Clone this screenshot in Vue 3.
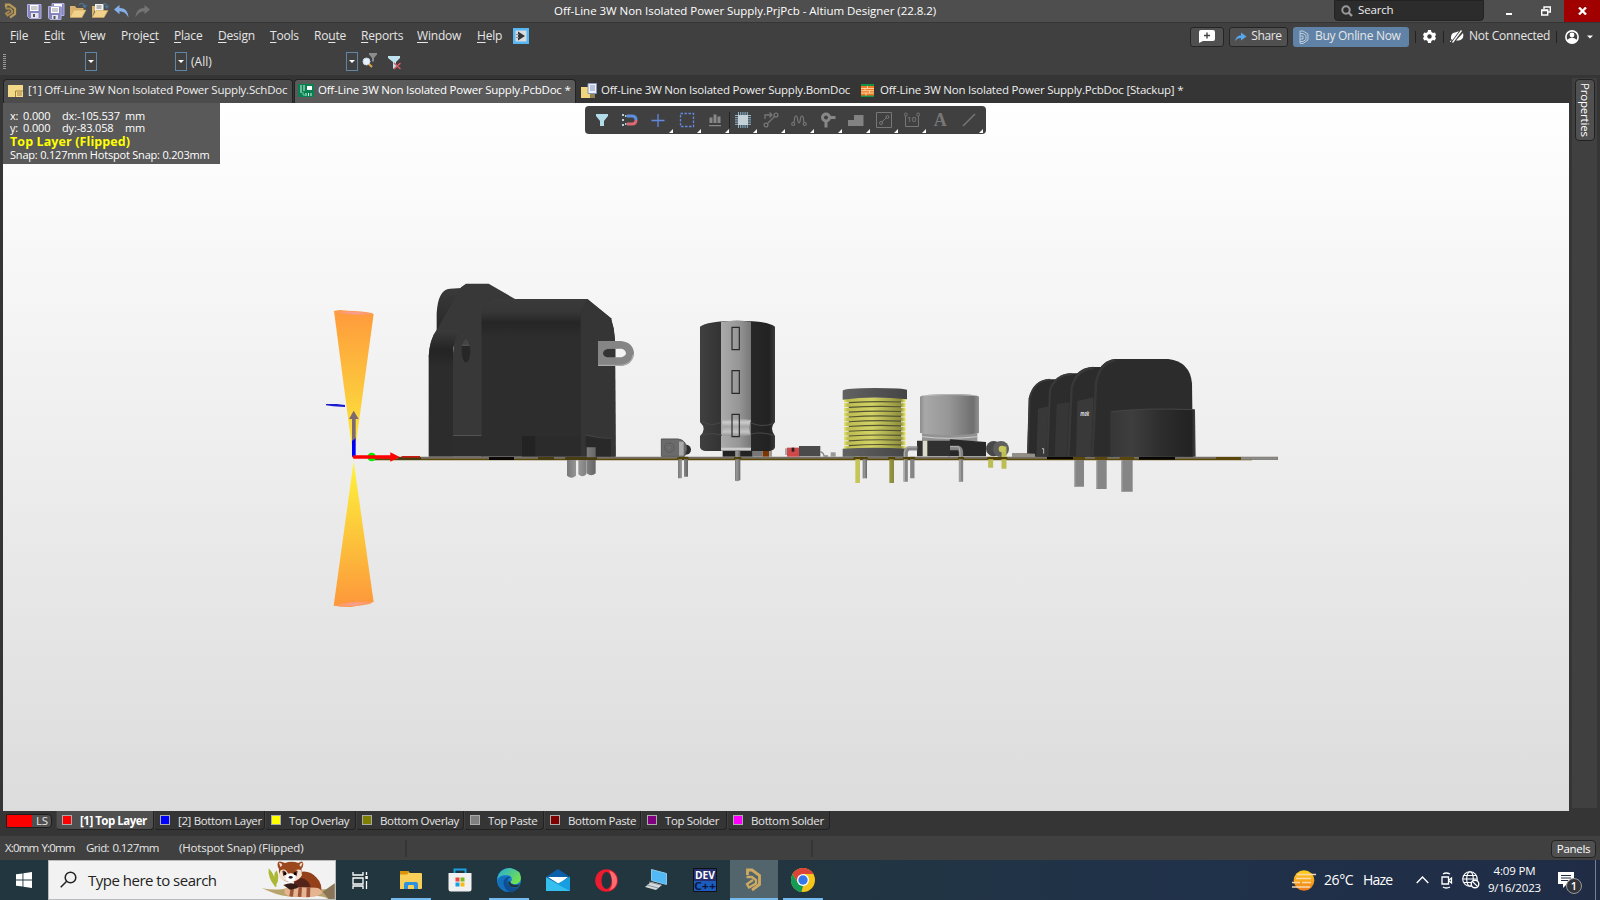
<script setup>
const menus = [
  { a: '', k: 'F', b: 'ile', w: 34 },
  { a: '', k: 'E', b: 'dit', w: 36 },
  { a: '', k: 'V', b: 'iew', w: 41 },
  { a: 'Proje', k: 'c', b: 't', w: 53 },
  { a: '', k: 'P', b: 'lace', w: 44 },
  { a: '', k: 'D', b: 'esign', w: 52 },
  { a: '', k: 'T', b: 'ools', w: 44 },
  { a: 'Ro', k: 'u', b: 'te', w: 47 },
  { a: '', k: 'R', b: 'eports', w: 56 },
  { a: '', k: 'W', b: 'indow', w: 60 },
  { a: '', k: 'H', b: 'elp', w: 36 },
]
const layers = [
  { name: '[1] Top Layer', color: '#ff0000', w: 98, active: true },
  { name: '[2] Bottom Layer', color: '#0000ff', w: 111 },
  { name: 'Top Overlay', color: '#ffff00', w: 91 },
  { name: 'Bottom Overlay', color: '#808000', w: 108 },
  { name: 'Top Paste', color: '#808080', w: 80 },
  { name: 'Bottom Paste', color: '#800000', w: 97 },
  { name: 'Top Solder', color: '#800080', w: 86 },
  { name: 'Bottom Solder', color: '#ff00ff', w: 103 },
]
const coils = Array.from({ length: 10 }, (_, i) => 305 + i * 14.3)
const chipPins = [0, 1, 2, 3, 4].map((i) => 3.5 + i * 2.2)
</script>

<template>
  <div class="screen">
    <header class="titlebar">
      <div class="quick">
        <svg class="logo" width="13" height="16" viewBox="0 0 26 32"><path d="M4 9V3h7l11 8v11l-10 7" fill="none" stroke="#b8995a" stroke-width="4.500" /><path d="M3 11h9l4 4v4L7 25l-3-4 7-5" fill="none" stroke="#a88a4e" stroke-width="4" /></svg>
        <svg class="q-save" width="15" height="16" viewBox="0 0 15 16"><path d="M.5 1.500h13.500v14h-11.500l-2-2z" fill="#8584bd" stroke="#b1b0de" /><path d="M3 2h8.500v6H3z" fill="#fff" /><path d="M4 4h6.500M4 6h6.500" stroke="#999" /><path d="M4 10h7.500v5H4z" fill="#e4e4f0" /><path d="M6 11h2v3H6z" fill="#555" /></svg>
        <svg class="q-all" width="17" height="17" viewBox="0 0 17 17"><path d="M4 .5h12v12H4z" fill="#8584bd" stroke="#b1b0de" /><path d="M6 1h8v3H6z" fill="#fff" /><path d="M.5 3.500h12.500v13h-11l-1.500-1.500z" fill="#8584bd" stroke="#b1b0de" /><path d="M3 4h8v6H3z" fill="#fff" /><path d="M4 6h6M4 8h6" stroke="#999" /><path d="M4 12h6v4H4z" fill="#e4e4f0" /><path d="M5.500 13h2v3h-2z" fill="#555" /></svg>
        <svg class="q-open" width="17" height="16" viewBox="0 0 17 16"><path d="M0 14V3h5l1.500 2h7v3" fill="#d9b36d" /><path d="M0 14.500 4 7h12l-4 7.500z" fill="#f1d28c" stroke="#d0a55b" stroke-width=".6" /><path d="M9 1.500c3-2 5-1 6 2m-2-1 2 2 1.500-2.500" fill="none" stroke="#4f7596" stroke-width="1.200" /></svg>
        <svg class="q-open" width="17" height="16" viewBox="0 0 17 16"><path d="M0 14V3h3v4" fill="#d9b36d" /><path d="M3 1h8.500v9H3z" fill="#f4f4f4" /><path d="M4.500 3h5M4.500 5h5" stroke="#777" /><path d="M0 14.500 4 7.500h12l-4 7z" fill="#f1d28c" stroke="#d0a55b" stroke-width=".6" /><path d="M11 1c2-1 4 0 4 3m-2-1 2 2 1.500-2.500" fill="none" stroke="#4f7596" stroke-width="1.200" /></svg>
        <svg class="q-undo" width="16" height="14" viewBox="0 0 16 14"><path d="M0 4.500 5.500 0v3C11 3 14 6 14.500 12.500 12 8 10 6.500 5.500 6.200v3z" fill="#86b0ea" /></svg>
        <svg width="16" height="14" viewBox="0 0 16 14"><path d="M15 4.500 9.500 0v3C4 3 1 6 .5 12.500 3 8 5 6.500 9.500 6.200v3z" fill="#747474" /></svg>
      </div>
      <div class="title">Off-Line 3W Non Isolated Power Supply.PrjPcb - Altium Designer (22.8.2)</div>
      <div class="winctl">
        <div class="search"><svg width="12" height="12" viewBox="0 0 12 12"><circle cx="5" cy="5" r="3.700" fill="none" stroke="#999" stroke-width="2" /><path d="m7.500 7.500 3.500 3.500" stroke="#999" stroke-width="2.400" /></svg><span>Search</span></div>
        <div class="min"></div>
        <svg class="restore" width="10" height="10" viewBox="0 0 10 10"><path d="M3 3V1h6.300v5H7M.7 4h6v5h-6z" fill="none" stroke="#fff" stroke-width="1.400" /><path d="M.5 4.500h6.500" stroke="#fff" stroke-width="1.500" /></svg>
        <div class="close"><svg width="9" height="8" viewBox="0 0 9 8"><path d="m1 .5 7 7m0-7-7 7" stroke="#fff" stroke-width="2.300" /></svg></div>
      </div>
    </header>

    <section class="menuarea">
      <div class="menurow">
        <nav class="menus">
          <span v-for="m in menus" :key="m.k + m.b" :style="{ width: m.w + 'px' }">{{ m.a }}<u>{{ m.k }}</u>{{ m.b }}</span>
          <svg width="16" height="16" viewBox="0 0 16 16"><path d="M0 0h16v16H0z" fill="#57b6f4" /><path d="M2.500 2.500h11v11h-11z" fill="#d7dce0" /><path d="M5 3.500 12 8l-7 4.500z" fill="#333" /><path d="M3 6h3v1H3zM3 9h3v1H3z" fill="#888" /></svg>
        </nav>
        <div class="account">
          <div class="btn note"><svg width="16" height="13" viewBox="0 0 16 13"><path d="M2 0h12q2 0 2 2v7q0 2-2 2H4l-4 2V2q0-2 2-2z" fill="#fff" /><path d="M8 2.500v6M5 5.500h6" stroke="#444" stroke-width="1.400" /></svg></div>
          <div class="btn share"><svg width="12" height="10" viewBox="0 0 12 10"><path d="M0 9C1 5 3 3.500 6 3.500V.5l5.500 4-5.500 4V6C3 6 2 7 0 9z" fill="#57a6ee" /></svg><span>Share</span></div>
          <div class="buy"><svg width="10" height="14" viewBox="0 0 10 14" fill="none" stroke="#d5dde5" stroke-width=".8"><path d="M1 1h3l5 3v6l-5 3.500H1M1 3.500h3l3 2v4l-3 2H1M1 6h3v3H1zM1 1v5M1 9v4" /></svg><span>Buy Online Now</span></div>
          <i></i>
          <svg class="gear" width="13" height="13" viewBox="0 0 13 13"><path d="M5 0h3l.4 2 1.800 1 1.800-.6L13 5l-1.200 1.500L13 8l-1.200 2.600-1.800-.6-1.600 1L8 13H5l-.4-2L3 10l-1.800.6L0 8l1.200-1.500L0 5l1.200-2.600L3 3l1.600-1z" fill="#fff" /><circle cx="6.500" cy="6.500" r="2.200" fill="#404040" /></svg>
          <i></i>
          <svg class="plug" width="14" height="13" viewBox="0 0 14 13"><path d="M1 9Q.5 3 5 2.500l4-1.200L2.500 10zM13 3Q14.500 9.500 9 10.500H6z" fill="#fff" /><path d="M11.500.5 2.500 12.500" stroke="#fff" stroke-width="1.300" /><path d="m1 10.500-1 1.500" stroke="#fff" /></svg>
          <span class="nc">Not Connected</span>
          <i></i>
          <svg class="user" width="14" height="14" viewBox="0 0 14 14"><circle cx="7" cy="7" r="6.100" fill="none" stroke="#fff" stroke-width="1.600" /><circle cx="7" cy="5" r="2.400" fill="#fff" /><path d="M2 10q5-4.500 10 0-2 3.500-5 3.500T2 10z" fill="#fff" /></svg>
          <svg width="6" height="4" viewBox="0 0 6 4"><path d="M0 .5h6L3 3.500z" fill="#fff" /></svg>
        </div>
      </div>
      <div class="filterrow">
        <b class="grip"></b>
        <div class="combo c1"><em></em></div>
        <div class="combo c2"><em></em></div>
        <div class="combo c3"><span>(All)</span><em></em></div>
        <svg class="find" width="17" height="16" viewBox="0 0 17 16"><path d="M7 0h8v1.500L12 5v3.500h-2V5L7 1.500z" fill="#8c8c8c" /><circle cx="4.500" cy="8.500" r="3.500" fill="#e6f2ff" stroke="#cbd6e2" /><path d="m7 11 3 3" stroke="#d8a54b" stroke-width="2.200" /></svg>
        <svg width="14" height="15" viewBox="0 0 14 15"><path d="M0 1h12v2L8 7v5l-3 2V7L0 3z" fill="#bfe3ee" /><path d="m6 8 6.500 6M12.500 8 6 14" stroke="#d46065" stroke-width="1.500" /></svg>
      </div>
    </section>

    <div class="tabs">
      <div class="tab t1"><svg width="15" height="12" viewBox="0 0 15 12"><path d="M0 0h15v12H0z" fill="#f2d987" /><path d="M7 5.500h8v6.500H7z" fill="#f7dd92" /><path d="M15 6H7.500v6M9 8h5M9 10h5" fill="none" stroke="#94762f" stroke-width=".9" /></svg><span>[1] Off-Line 3W Non Isolated Power Supply.SchDoc</span></div>
      <div class="tab t2"><svg width="16" height="13" viewBox="0 0 16 13"><path d="M0 0h16v13H0z" fill="#078150" /><path d="M9 2h5v4H9z" fill="#fff" /><path d="M2 2h2M2 4h2M2 6h2M2 8h2M5 2h2M5 4h2M5 6h2M8 9v3M10.500 9v3M13 9v3" stroke="#d7f2e4" /><path d="M5 8v3h2" stroke="#79ccaa" fill="none" /></svg><span>Off-Line 3W Non Isolated Power Supply.PcbDoc *</span></div>
      <div class="tab t3"><svg width="16" height="15" viewBox="0 0 16 15"><path d="M0 4h9v11H0z" fill="#f2d67d" /><path d="M7 .5h8.500v10H7z" fill="#eef3fb" stroke="#8395bd" /><path d="M9 3h5M9 5h5M9 7h5" stroke="#8395bd" /><path d="M8 12h6M8 14h6" stroke="#ead07a" stroke-width="1.200" /></svg><span>Off-Line 3W Non Isolated Power Supply.BomDoc</span></div>
      <div class="tab t4"><svg width="13" height="13" viewBox="0 0 13 13"><path d="M0 0h13v13H0z" fill="#149047" /><path d="M0 2h13v9.500H0z" fill="#f07a28" /><path d="M0 4.500h13M0 6.700h13M0 9h13M6.500 2v2.500M4 4.500v2M8.500 6.500V9M5 9v2.500" stroke="#ffdca6" stroke-width=".9" /></svg><span>Off-Line 3W Non Isolated Power Supply.PcbDoc [Stackup] *</span></div>
    </div>

    <main class="work">
      <div class="canvas">
        <svg class="scene" width="1566" height="708" viewBox="3 103 1566 708">
          <defs>
            <linearGradient id="bg" x2="0" y2="1"><stop stop-color="#fff" /><stop offset="1" stop-color="#dcdcdc" /></linearGradient>
            <linearGradient id="up" x2="0" y2="1"><stop stop-color="#ff9a3c" /><stop offset=".55" stop-color="#fcc83c" /><stop offset="1" stop-color="#fff43a" /></linearGradient>
            <linearGradient id="dn" x2="0" y2="1"><stop stop-color="#fff43a" /><stop offset=".45" stop-color="#fccb3b" /><stop offset="1" stop-color="#fd963b" /></linearGradient>
            <radialGradient id="pk"><stop stop-color="#f7a0a0" /><stop offset="1" stop-color="#fd9a50" /></radialGradient>
            <linearGradient id="side" x2="0" y2="1"><stop stop-color="#3b3b3b" /><stop offset=".16" stop-color="#242424" /><stop offset=".3" stop-color="#2c2c2c" /></linearGradient>
            <linearGradient id="edge" x2="0" y2="1"><stop stop-color="#3a3a3a" /><stop offset="1" stop-color="#272727" /></linearGradient>
            <linearGradient id="roof" x2="0" y2="1"><stop stop-color="#3a3a3a" /><stop offset=".35" stop-color="#363636" /><stop offset=".62" stop-color="#262626" /><stop offset="1" stop-color="#2d2d2d" /></linearGradient>
            <linearGradient id="cyl"><stop stop-color="#404040" /><stop offset=".28" stop-color="#333" /><stop offset=".6" stop-color="#292929" /><stop offset=".92" stop-color="#222" /><stop offset="1" stop-color="#3a3a3a" /></linearGradient>
            <linearGradient id="sil"><stop stop-color="#8c8c8c" /><stop offset=".08" stop-color="#a8a8a8" /><stop offset=".5" stop-color="#969696" /><stop offset=".9" stop-color="#6f6f6f" /><stop offset="1" stop-color="#929292" /></linearGradient>
            <linearGradient id="band"><stop stop-color="#aaa" /><stop offset=".6" stop-color="#969696" /><stop offset="1" stop-color="#787878" /></linearGradient>
            <linearGradient id="neck" x2="0" y2="1"><stop stop-color="#999" /><stop offset=".2" stop-color="#ccc" /><stop offset=".45" stop-color="#a5a5a5" /><stop offset=".75" stop-color="#c4c4c4" /><stop offset="1" stop-color="#8f8f8f" /></linearGradient>
            <linearGradient id="yel"><stop stop-color="#e6e66a" /><stop offset=".06" stop-color="#bcbc52" /><stop offset=".45" stop-color="#d2d265" /><stop offset=".92" stop-color="#90903f" /><stop offset="1" stop-color="#eded70" /></linearGradient>
            <linearGradient id="cap"><stop stop-color="#626262" /><stop offset="1" stop-color="#454545" /></linearGradient>
            <linearGradient id="pin"><stop stop-color="#777" /><stop offset=".35" stop-color="#999" /><stop offset="1" stop-color="#666" /></linearGradient>
            <linearGradient id="ypin"><stop stop-color="#c6c65a" /><stop offset=".5" stop-color="#bbbb52" /><stop offset="1" stop-color="#8a8a3e" /></linearGradient>
            <linearGradient id="term"><stop stop-color="#363636" /><stop offset=".25" stop-color="#3e3e3e" /><stop offset=".6" stop-color="#2d2d2d" /><stop offset=".95" stop-color="#222" /><stop offset="1" stop-color="#444" /></linearGradient>
          </defs>
          <path d="M3 103h1566v708H3z" fill="url(#bg)" />

          <g transform="translate(320 270) scale(.33333)">
            <path d="M42 123 60 120 161 132 101 572z" fill="url(#up)" />
            <ellipse cx="103" cy="129" rx="56" ry="6" transform="rotate(3 103 129)" fill="url(#pk)" />
            <path d="M101 575 41 1007 92 1011 161 996z" fill="url(#dn)" />
            <ellipse cx="102" cy="1002" rx="54" ry="7" transform="rotate(-5 102 1002)" fill="url(#pk)" />
            <path d="M18 402 50 402 75 405 75 411 40 409 18 406z" fill="#1a1ad2" />

            <path d="M350 180V130Q354 58 390 56L425 54 450 90 400 190z" fill="url(#edge)" />
            <path d="M350 180 423 52 438 41h68L585 87 500 130 399 230 326 260Q328 210 350 180z" fill="#383838" />
            <path d="M326 560V260Q330 205 350 180L420 180Q399 205 399 260V560z" fill="url(#side)" />
            <path d="M399 497V250Q402 200 430 170L500 95 525 87 502 497z" fill="#383838" />
            <path d="M399 497h90v63h-90z" fill="#2d2d2d" />
            <path d="M485 560V140Q488 95 520 87H802L873 145Q883 175 885 210L887 560z" fill="#2d2d2d" />
            <path d="M485 200V140Q488 95 520 87H802L782 130V200z" fill="url(#roof)" />
            <path d="M782 560V130L802 87 873 145Q883 175 885 210L887 560z" fill="#353535" />
            <path d="M606 498h40v62h-40z" fill="#232323" /><path d="M646 498h136v62H646z" fill="#2b2b2b" />
            <path d="M797 498 873 504V560H797z" fill="#292929" /><path d="M797 495 838 503 873 505" stroke="#444" stroke-width="3" fill="none" />
            <ellipse cx="438" cy="242" rx="13" ry="35" fill="#272727" /><path d="M426 226Q430 208 438 207 446 208 449 226z" fill="#444" /><path d="M426 226h23" stroke="#6a6a6a" stroke-width="2" />
            <path d="M862 236H887V262H862Q848 250 862 236z" fill="#333" />
            <path d="M887 236H904Q917 239 918 249 916 259 904 262H887z" fill="#f3f3f3" />
            <path d="M834 213H902Q940 217 942 250 938 285 902 288H834zM862 237Q850 240 849 250 850 260 862 262H904Q918 258 918 249 916 238 904 236z" fill="#858585" fill-rule="evenodd" />
            <path d="M834 286H902Q936 283 940 254" fill="none" stroke="#aaa" stroke-width="4" />
          </g>

          <path d="M372 456.700H1278v3.300H372z" fill="#747067" /><path d="M372 458.700H1252v1.500H372z" fill="#5c4908" />
          <path d="M398 457h23v3h-23zM538 457h16v3h-16zM567 457h30v3h-30z" fill="#493d12" />
          <path d="M489 457h25v3h-25z" fill="#090806" />

          <g transform="translate(320 270) scale(.33333)">
            <path d="M741 567h27v50q-13 12-27 0zM775 565h24v48q-12 12-24 0zM800 532h27v78q-13 12-27 0z" fill="url(#pin)" />
            <path d="M735 562h95v8h-95z" fill="#493d12" />
            <path d="M96 560V508L107 503V560z" fill="#00f" /><path d="M96 513V447H87L101 422 116 447H107V505z" fill="#7d6a70" />
            <circle cx="155" cy="561" r="13" fill="#00f000" />
            <path d="M101 556H211V547L239 561 211 575V566H101Q95 561 101 556z" fill="#f00" /><path d="M245 558h55v5h-55z" fill="#c91a10" />
          </g>

          <g transform="translate(640 300) scale(.33333)">
            <circle cx="138" cy="449" r="15" fill="#2c2c2c" />
            <path d="M64 417h50q25 3 26 30l-6 22H64z" fill="#6b6b6b" stroke="#565656" stroke-width="3" /><path d="M117 425h14v42h-14z" fill="#aaa" />
            <circle cx="88" cy="443" r="14" fill="#707070" stroke="#565656" stroke-width="3" /><circle cx="88" cy="443" r="8" fill="none" stroke="#5c5c5c" stroke-width="2" />
            <path d="M114 470h12v65h-12zM132 470h12v60h-12z" fill="url(#pin)" />
            <path d="M248 445h90v25h-90z" fill="#222" /><path d="M338 452h30v18h-30z" fill="#777" /><path d="M368 452h20v18h-20z" fill="#7c3604" /><path d="M388 452h8v18h-8z" fill="#999" />
            <path d="M180 80Q200 63 292 62 385 62 405 80V366Q387 384 405 408V442Q402 452 390 453H195Q182 451 180 442V408Q202 387 180 366z" fill="url(#cyl)" />
            <path d="M243 65Q290 60 333 65V447H243z" fill="url(#band)" /><path d="M243 360q50-8 90 0-10 25 0 45-45 8-90 0 12-25 0-45z" fill="url(#neck)" /><path d="M243 443h90v9h-90z" fill="#ccc" />
            <path d="M186 364q30 18 58 2M184 406q30-10 62 0M331 368q35 16 70 2M331 402q35-8 69 4" fill="none" stroke="#484848" stroke-width="3" />
            <path d="M276 82h22v67h-22zM276 212h22v68h-22zM276 343h22v67h-22z" fill="none" stroke="#292929" stroke-width="3.500" />
            <path d="M285 452h16v88l-8 4-8-2z" fill="url(#pin)" />
            <path d="M435 445h10v20h-10z" fill="#aaa" /><path d="M441 443h37v27h-37z" fill="#d0484a" /><path d="M455 443h8v12h-8z" fill="#222" /><path d="M477 438h64v31h-64z" fill="#4a4a4a" /><path d="M541 456q9 0 11 12h12" fill="none" stroke="#888" stroke-width="4" /><path d="M572 457h15v13h-15z" fill="#999" />
            <path d="M612 292h185v155H612z" fill="url(#yel)" />
            <g v-for="y in coils" :key="y"><path :d="`M626 ${y + 3} Q700 ${y - 2} 783 ${y + 1}`" fill="none" stroke="#555533" stroke-width="3.500" /><path :d="`M611 ${y + 3}h15M783 ${y + 3}h15`" stroke="#eee" stroke-width="2.500" /></g>
            <path d="M608 272Q614 264 704 264 795 264 801 270V298Q700 286 608 299z" fill="url(#cap)" /><path d="M608 446Q700 440 801 446V470H608z" fill="url(#cap)" />
            <path d="M646 470h14v79h-14zM748 470h14v79h-14z" fill="url(#ypin)" /><path d="M668 470h13v65h-13z" fill="url(#pin)" />
            <path d="M846 400H1012V424H846z" fill="#929292" /><path d="M840 290Q850 283 928 282 1010 283 1017 290V398Q1010 403 928 405 850 403 840 398z" fill="url(#sil)" /><path d="M846 410q82 10 166 0" stroke="#ccc" stroke-width="3" fill="none" /><path d="M846 287q82-7 165 0" stroke="#c5c5c5" stroke-width="2" fill="none" />
            <path d="M930 418 1038 426V469H925z" fill="#282828" /><path d="M831 422H930V469H831z" fill="#303030" /><path d="M848 422h14v47h-14z" fill="#dcdccb" />
            <path d="M832 445h-25q-10 2-10 14V545M817 470v65M930 444h26q7 3 7 15v86" fill="none" stroke="#858585" stroke-width="13" /><path d="M832 441h-28q-10 4-11 16V545M930 440h25q5 5 5 18v86" fill="none" stroke="#b5b5b5" stroke-width="3" />
            <circle cx="1061" cy="446" r="23" fill="#484848" /><circle cx="1083" cy="447" r="24" fill="#5e5e5e" /><path d="M1084 447h8V506M1052 470v33" fill="none" stroke="#bdbd55" stroke-width="15" /><circle cx="1086" cy="447" r="10" fill="#c8c85c" />
            <path d="M1116 459h72v11h-72z" fill="#96928e" />
            <path d="M112 471h34v7h-34zM282 471h22v7h-22zM641 471h42v7h-42zM745 471h20v7h-20zM789 471h36v7h-36zM954 471h18v7h-18zM1042 471h60v7h-60z" fill="#544308" />
          </g>

          <g transform="translate(1000 340) scale(.33333)">
            <path d="M81 350 86 175Q100 119 150 118H200V350z" fill="#2b2b2b" />
            <path d="M84 350 89 175Q102 121 150 119" fill="none" stroke="#3a3a3a" stroke-width="5" />
            <path d="M109 350 114 206 150 198V350z" fill="#383838" />
            <path d="M138 350 149 150Q168 100 215 100H260V350z" fill="#2c2c2c" /><path d="M142 350 150 150Q166 104 215 102" fill="none" stroke="#3a3a3a" stroke-width="6" />
            <path d="M164 350 170 192 210 186V350z" fill="#363636" />
            <path d="M200 350 210 142Q225 82 280 81H340V350z" fill="#2c2c2c" /><path d="M205 350 215 142Q230 86 280 84" fill="none" stroke="#393939" stroke-width="7" />
            <path d="M228 350 232 183 280 172V350z" fill="#393939" />
            <path d="M272 350 283 130Q295 62 345 57H505Q570 65 576 130L579 350z" fill="#2c2c2c" /><path d="M277 350 288 130Q300 66 345 61" fill="none" stroke="#373737" stroke-width="8" />
            <path d="M331 216Q400 205 585 209L587 350H331z" fill="url(#term)" /><path d="M334 215Q430 203 584 209" fill="none" stroke="#444" stroke-width="3" />
            <text x="241" y="227" class="mark" textLength="27" lengthAdjust="spacingAndGlyphs">mak</text><path d="M126 326h5v15" fill="none" stroke="#bbb" stroke-width="3" />
            <path d="M36 342 50 339 105 341V351H36z" fill="#938f87" />
            <path d="M222 360h30v80h-30zM288 360h32v87h-32zM363 360h35v95h-35z" fill="#858585" /><path d="M222 360h4v80h-4zM288 360h4v86h-4zM363 360h4v95h-4z" fill="#aaa" />
            <path d="M141 351h78v7h-78zM417 351h108v8H417z" fill="#080703" /><path d="M219 351h36v8h-36zM285 351h37v8h-37zM359 351h43v8h-43zM648 351h75v8h-75z" fill="#5b470c" /><path d="M723 352h110v7H723z" fill="#8c8b87" />
          </g>
        </svg>

        <div class="hud">
          <div class="coord"><span>x:</span><span>0.000</span><span>dx:-105.537</span><span>mm</span></div>
          <div class="coord"><span>y:</span><span>0.000</span><span>dy:-83.058</span><span>mm</span></div>
          <strong>Top Layer (Flipped)</strong>
          <p>Snap: 0.127mm Hotspot Snap: 0.203mm</p>
        </div>

        <div class="tools">
          <div><svg viewBox="0 0 16 16"><path d="M2 2h12v2l-4 5v5H6V9L2 4z" fill="#b3dceb" /></svg></div>
          <div><svg viewBox="0 0 16 16"><path d="M5 4h5q4 0 4 4" fill="none" stroke="#5c8fe0" stroke-width="3" /><path d="M14 8q0 4-4 4H5" fill="none" stroke="#dc6874" stroke-width="3" /><path d="M0 3h2M0 8h2M0 13h2M3 4h1.500M3 12h1.500" stroke="#b4cfe0" stroke-width="2" /></svg></div>
          <div class="more"><svg viewBox="0 0 16 16"><path d="M8 2v13M1.500 8.500h13" stroke="#6288e0" stroke-width="1.300" /></svg></div>
          <div class="more"><svg viewBox="0 0 16 16"><path d="M1.500 1.500h13v13h-13z" fill="none" stroke="#6288e0" stroke-dasharray="2.500 1.500" stroke-width="1.300" /></svg></div>
          <div class="more"><svg viewBox="0 0 16 16"><path d="M2.500 5.500h3V11h-3zM6.500 2.500h3V11h-3zM10.500 4.500h3V11h-3zM2 13h12v1.300H2z" fill="#888" /></svg></div>
          <div class="more sep"><svg viewBox="0 0 16 16"><path d="M3 3h10v10H3z" fill="#c5d1d8" /><path v-for="p in chipPins" :key="p" :d="`M${p} 0v3M${p} 13v3M0 ${p}h3M13 ${p}h3`" stroke="#8fb8cf" /></svg></div>
          <div class="more"><svg viewBox="0 0 16 16" fill="none" stroke="#777" stroke-width="1.300"><path d="M2 7V3h6M6.500.500 9 3 6.500 5.500M4 12l7.500-7.500" /><circle cx="3" cy="13" r="1.900" /><circle cx="13" cy="3" r="1.900" /></svg></div>
          <div class="more"><svg viewBox="0 0 16 16" fill="none" stroke="#777" stroke-width="1.200"><path d="M2.500 10.500C4.500 9 2.500 4 5 4s1 7 3 7 .5-7 3-7 .5 5 2.500 6.500" /><circle cx="2.200" cy="12" r="1.500" /><circle cx="13.800" cy="12" r="1.500" /></svg></div>
          <div class="more"><svg viewBox="0 0 16 16" fill="none" stroke="#888"><circle cx="6" cy="5.500" r="3.500" stroke-width="3" /><path d="M9 5.500h6.500M6 9v6.500" stroke-width="3" /></svg></div>
          <div class="more"><svg viewBox="0 0 16 16"><path d="M0 8h6V3h9.500v11H0z" fill="#828282" /></svg></div>
          <div class="more"><svg viewBox="0 0 16 16" fill="none" stroke="#777"><path d="M.5.500h15v15H.5zM6 10l5-5" /><circle cx="5" cy="11" r="1.500" /><circle cx="11.500" cy="5" r="1.500" /></svg></div>
          <div class="more"><svg viewBox="0 0 16 16" fill="none" stroke="#777"><path d="M1.500 4v10.500h13V4" /><circle cx="1.800" cy="2.500" r="1.500" /><circle cx="14.200" cy="2.500" r="1.500" /></svg><small>10</small></div>
          <div class="letter">A</div>
          <div class="more"><svg viewBox="0 0 16 16"><path d="M2 14 14 2" stroke="#777" stroke-width="1.500" /></svg></div>
        </div>
      </div>
      <aside class="side"><div class="proptab">Properties</div></aside>
    </main>

    <div class="layers">
      <div class="ls"><b></b><span>LS</span></div>
      <div v-for="l in layers" :key="l.name" class="layer" :class="{ active: l.active }" :style="{ width: l.w + 'px' }"><b :style="{ background: l.color }"></b><span>{{ l.name }}</span></div>
    </div>

    <div class="status">
      <span class="s1">X:0mm Y:0mm</span><span class="s2">Grid: 0.127mm</span><span class="s3">(Hotspot Snap) (Flipped)</span><i class="s4"></i>
      <div class="panels">Panels</div>
    </div>

    <footer class="taskbar">
      <div class="start"><svg width="16" height="16" viewBox="0 0 16 16"><path d="M0 2.300 6.500 1.400v6.200H0zM7.400 1.200 16 0v7.600H7.400zM0 8.400h6.500v6.200L0 13.700zM7.400 8.400H16V16l-8.600-1.200z" fill="#fff" /></svg></div>
      <div class="find-box">
        <svg class="mag" width="17" height="17" viewBox="0 0 17 17"><circle cx="10.500" cy="6.500" r="5.300" fill="none" stroke="#222" stroke-width="1.500" /><path d="M6.700 10.300.7 16.300" stroke="#222" stroke-width="1.500" /></svg>
        <span>Type here to search</span>
        <svg class="panda" width="75" height="38" viewBox="0 0 225 114">
          <path d="M6 82Q40 88 70 84T130 90L200 84 224 66V114H205Q180 98 110 108 60 106 35 94z" fill="#b7a36b" /><path d="M188 92 224 68V114H206z" fill="#8a7458" />
          <path d="M46 78Q22 50 26 22 46 42 50 76M50 70Q36 40 50 28 60 50 50 70" fill="#abb735" />
          <path d="M110 36Q145 22 170 50 190 70 182 98L110 92Q94 65 110 36z" fill="#93401b" /><path d="M108 52Q150 46 154 92L106 88Q98 62 108 52z" fill="#54241a" />
          <path d="M54 4Q58-2 75 6 95-1 115 6 128-4 130 8 130 18 124 24 130 48 111 59 95 67 75 60 54 48 57 24 50 14 54 4z" fill="#9b481f" />
          <path d="M57 5q8-1 10 8l-6 5zM128 5q-8-1-10 8l5 5zM62 28q16-8 23 12l8 24Q62 59 56 42zM124 28q-16-8-24 12l-7 24q27-6 33-22z" fill="#f3ded0" />
          <path d="M67 30q7-5 13 8l-10 8zM113 30q-7-5-13 8l10 8z" fill="#653421" /><ellipse cx="92" cy="50" rx="15" ry="13" fill="#fff" /><circle cx="75" cy="38" r="4" /><circle cx="105" cy="38" r="4" /><ellipse cx="92" cy="49" rx="6" ry="4" fill="#242029" />
          <path d="M73 82Q120 76 168 80 185 82 187 96 170 112 120 108 80 106 74 98z" fill="#e5b491" /><path d="M92 80l10 1-3 26-11-1zM116 79l10 0-2 29-11-1zM140 79l11 0-1 29-11 1z" fill="#9c5236" /><path d="M70 72Q96 62 110 72T90 86z" fill="#351c17" />
        </svg>
      </div>
      <div class="slot taskview"><svg width="17" height="17" viewBox="0 0 17 17" fill="none" stroke="#fff" stroke-width="1.300"><path d="M1 0v3h10V0M1 6h10v6H1zM1 17v-3h10v3M14.500 0v3M14.500 9v8" /><path d="M13.300 5.500h2.500" stroke-width="3" /></svg></div>
      <div class="slot open"><svg width="22" height="19" viewBox="0 0 22 19"><path d="M0 1q0-1 1-1h7l2 2h11q1 0 1 1v14q0 1-1 1H0z" fill="#f8cf59" /><path d="M0 1q0-1 1-1h7l1 1.500-2 2H0z" fill="#d9930d" /><path d="M4 18v-5q0-2 2-2h10q2 0 2 2v5h-4v-3q0-1-1-1H9q-1 0-1 1v3z" fill="#2e91df" /></svg></div>
      <div class="slot"><svg width="24" height="24" viewBox="0 0 24 24"><path d="M6.500 6V1.500h11V6" fill="none" stroke="#1ca0df" stroke-width="2" /><path d="M.5 5h23v16q0 2.500-2.500 2.500H3Q.5 23.500.5 21z" fill="#f1f1f1" /><path d="M7.500 9.500h4v4h-4z" fill="#e44" /><path d="M12.500 9.500h4v4h-4z" fill="#7dba22" /><path d="M7.500 14.500h4v4h-4z" fill="#14a1e5" /><path d="M12.500 14.500h4v4h-4z" fill="#f9ba16" /></svg></div>
      <div class="slot open"><svg width="24" height="24" viewBox="0 0 24 24"><defs><linearGradient id="eg" x2="1" y2=".7"><stop stop-color="#25a9dd" /><stop offset="1" stop-color="#75e34a" /></linearGradient></defs><circle cx="12" cy="12" r="12" fill="#1782d4" /><path d="M0 11Q3 0 13 0q11 2 11 10-1 7-8 6-4-1-1-4 0-5-6-5Q3 7 0 11z" fill="url(#eg)" /><path d="M9 8Q3 17 13 24 3 23 0 14 3 7 9 8z" fill="#1270bd" /><path d="M14 9q-5 2-3 7 4 6 11 3-4 5-10 5-7-5-5-12 3-5 7-3z" fill="#104e94" /><path d="M12 12q2 7 11 4l-2 3q-8 2-10-4z" fill="#22343c" /></svg></div>
      <div class="slot"><svg width="24" height="22" viewBox="0 0 24 22"><path d="M0 8 12 0l12 8-12 8z" fill="#0c5fab" /><path d="M2 8h20l-9 7z" fill="#fff" /><path d="M0 8l12 7L24 8v14H0z" fill="#35bfee" /><path d="m24 8-13 7 13 7z" fill="#169ee1" /></svg></div>
      <div class="slot"><svg width="23" height="23" viewBox="0 0 23 23"><ellipse cx="11.500" cy="11.500" rx="11.300" ry="11.300" fill="#ed1b2e" /><path d="M14 1.500Q22 4 22 11.500T14 21.500Q18 17 17 11T14 1.500z" fill="#ff6c71" /><ellipse cx="11.500" cy="11.500" rx="5" ry="8.500" fill="#22353e" /></svg></div>
      <div class="slot"><svg width="22" height="22" viewBox="0 0 22 22"><path d="m6.500.5 15 4v11l-15-4z" fill="#53b9f5" stroke="#8cc7e9" /><path d="m0 18 6-5 11 3-6 5z" fill="#d4d9dc" /><path d="m4 13 12 3M2 16l11 3" stroke="#89939a" /></svg></div>
      <div class="slot"><svg width="24" height="24" viewBox="0 0 24 24"><path d="M.5.500h23v23H.5z" fill="#1c5cbd" stroke="#111" /><path d="M1 1h22v12H1z" fill="#27306f" /><text x="2" y="11" class="dev" textLength="20" lengthAdjust="spacingAndGlyphs">DEV</text><text x="1" y="22" class="cpp" textLength="22" lengthAdjust="spacingAndGlyphs">C++</text></svg></div>
      <div class="slot open current"><svg width="17" height="24" viewBox="0 0 17 24" fill="none" stroke="#cdaa62" stroke-width="2.800"><path d="M2.500 7V2H7l7.500 5.500v9L7 22" /><path d="M1.500 9H7l4 3v3.500l-7 4-2-3.500 6-4" stroke-width="2.300" /></svg></div>
      <div class="slot open"><svg width="24" height="24" viewBox="0 0 24 24"><circle cx="12" cy="12" r="12" fill="#f6c519" /><path d="M1.600 6A12 12 0 0 1 22.400 6H12l-5 9z" fill="#db4437" /><path d="M1.600 6 7 15l5 3-1.500 6A12 12 0 0 1 1.600 6z" fill="#149b55" /><circle cx="12" cy="12" r="6" fill="#fff" /><circle cx="12" cy="12" r="4.700" fill="#3577e8" /></svg></div>
      <div class="tray">
        <svg width="24" height="21" viewBox="0 0 24 21"><defs><linearGradient id="sun" x2="0" y2="1"><stop stop-color="#ffd21b" /><stop offset="1" stop-color="#f07a1c" /></linearGradient></defs><circle cx="12" cy="10.500" r="10.300" fill="url(#sun)" /><path d="M5 4.500h19M4 8.500h15M0 12.500h8M10 12.500h9M0 17h18" stroke="#f8d9b0" stroke-width="1.600" /></svg>
        <span class="temp">26°C</span><span class="haze">Haze</span>
        <svg class="chev" width="13" height="8" viewBox="0 0 13 8"><path d="m.7 7 5.800-6 5.800 6" fill="none" stroke="#fff" stroke-width="1.400" /></svg>
        <svg class="cam" width="12" height="17" viewBox="0 0 12 17" fill="none" stroke="#fff" stroke-width="1.300"><path d="M1 5h6.500v7H1zM8 8l2.500-2v5L8 9M2 2q3-2 7 0M2 15q3 2 7 0" /></svg>
        <svg class="globe" width="18" height="18" viewBox="0 0 18 18" fill="none" stroke="#fff" stroke-width="1.100"><circle cx="8" cy="8" r="7.300" /><ellipse cx="8" cy="8" rx="3.300" ry="7.300" /><path d="M1 8h14M2 4.500h12M2 11.500h12" /><circle cx="13" cy="13" r="3.800" fill="#202d45" stroke-width="1.400" /><path d="m10.500 10.500 5 5" /></svg>
        <div class="clock"><span>4:09 PM</span><span>9/16/2023</span></div>
        <div class="notif"><svg width="16" height="17" viewBox="0 0 16 17"><path d="M0 0h16v12H9l-4 4v-4H0z" fill="#fff" /><path d="M3 3.500h10M3 6h10M3 8.500h7" stroke="#202d45" /></svg><b>1</b></div>
        <i></i>
      </div>
    </footer>
  </div>
</template>

<style>
html, body { margin: 0; overflow: hidden; background: #353535; }
</style>

<style scoped>
.screen { width: 1600px; height: 900px; display: flex; flex-direction: column; overflow: hidden; font-family: "Open Sans", "Noto Sans", sans-serif; font-size: 11.500px; line-height: 16px; color: #e6e6e6; white-space: nowrap; }
.screen * { box-sizing: border-box; }
svg { display: block; flex: none; }

.titlebar { height: 23px; flex: none; display: flex; align-items: flex-start; background: #4e4e4e; border-bottom: 1px solid #353535; }
.quick { display: flex; width: 554px; padding: 3px 0 0 4px; }
.logo { margin-right: 10px; } .q-save { margin-right: 6px; } .q-all { margin-right: 5px; } .q-open { margin-right: 5px; } .q-undo { margin: 2px 5px 0 0; } .q-undo + svg { margin-top: 2px; }
.title { padding-top: 3px; width: 780px; color: #fff; letter-spacing: -.03px; }
.winctl { display: flex; }
.search { width: 150px; height: 21px; background: #2c2c2c; border: 1px solid #222; border-radius: 0 0 4px 4px; display: flex; align-items: center; padding-left: 6px; gap: 5px; color: #eee; letter-spacing: -.15px; }
.search span { margin-top: -1px; }
.min { width: 6px; height: 2px; margin: 13px 29px 0 22px; background: #fff; }
.restore { margin: 6px 13px 0 0; }
.close { width: 36px; height: 22px; background: #a00000; display: flex; align-items: center; justify-content: center; }

.menuarea { height: 52px; flex: none; background: #404040; }
.menurow { height: 28px; display: flex; justify-content: space-between; }
.menus { display: flex; padding: 5px 0 0 10px; font-size: 12px; }
.menus span { letter-spacing: -.2px; }
.menus u { text-underline-offset: 2px; }
.account { width: 410px; display: flex; align-items: center; height: 27px; }
.account > * { flex: none; }
.account span { margin-top: -1px; }
.account i { width: 1px; height: 12px; background: #222; }
.btn { height: 20px; border: 1px solid #252525; border-radius: 3px; background: #505050; display: flex; align-items: center; justify-content: center; font-size: 12px; letter-spacing: -.4px; }
.note { width: 34px; margin-right: 5px; } .share { width: 59px; gap: 4px; margin-right: 5px; }
.buy { width: 116px; height: 20px; border-radius: 3px; background: #5f82a6; display: flex; align-items: center; padding-left: 6px; gap: 6px; font-size: 12px; letter-spacing: -.3px; margin-right: 6px; }
.gear { margin: 0 7px 0 7px; } .plug { margin: 0 5px 0 6px; } .nc { width: 82px; margin-right: 5px; font-size: 12px; letter-spacing: -.22px; } .user { margin: 0 8px 0 8px; }
.filterrow { display: flex; height: 22px; padding-left: 3px; }
.grip { width: 3px; height: 15px; margin-top: 3px; background: repeating-linear-gradient(#999 0 1px, transparent 1px 2px); }
.combo { height: 20px; margin-top: 1px; display: flex; justify-content: space-between; }
.combo em { width: 12px; height: 19px; margin-left: auto; border: 1px solid #5f86a8; position: relative; }
.combo em::after { content: ""; position: absolute; left: 2px; top: 7px; border: 3px solid transparent; border-top-color: #fff; border-bottom: 0; }
.c1 { width: 91px; } .c2 { width: 90px; } .c3 { width: 171px; padding-left: 4px; font-size: 12px; }
.c3 span { margin-top: 2px; }
.find { margin: 2px 9px 0 4px; } .find + svg { margin-top: 4px; }

.tabs { height: 28px; flex: none; background: #353535; display: flex; padding: 4px 0 0 3px; }
.tab { height: 24px; display: flex; align-items: center; gap: 5px; padding-left: 4px; border: 1px solid transparent; border-bottom: 0; border-radius: 4px 4px 0 0; color: #eee; flex: none; padding-bottom: 1px; }
.tab span { letter-spacing: -.22px; margin-top: -3px; }
.tab svg { margin-top: -1px; }
.t1 { width: 290px; background: #4c4c4c; border-color: #222; } .t2 { width: 282px; margin-left: 1px; background: #5a5a5a; border-color: #222; padding-left: 3px; gap: 4px; color: #fff; }
.t3 { width: 280px; padding-left: 4px; gap: 4px; } .t4 { width: 340px; padding-left: 4px; gap: 6px; }

.work { height: 708px; flex: none; display: flex; background: #353535; padding-left: 3px; }
.canvas { width: 1566px; height: 708px; position: relative; flex: none; }
.hud { position: absolute; left: 0; top: 0; width: 217px; height: 61px; background: #595959; padding: 7px 0 0 7px; color: #fff; font-size: 11px; line-height: 12px; }
.coord { display: flex; }
.coord span { letter-spacing: -.15px; }
.coord span:nth-child(1) { width: 13px; } .coord span:nth-child(2) { width: 39px; } .coord span:nth-child(3) { width: 63px; }
.hud strong { display: block; color: #ff0; font-size: 12.500px; line-height: 14px; letter-spacing: .1px; padding-top: 1px; margin-bottom: -1px; }
.hud p { margin: 0; line-height: 14px; letter-spacing: -.2px; font-size: 11px; }
.tools { position: absolute; left: 582px; top: 3px; width: 401px; height: 28px; background: #404040; border-radius: 4px; display: flex; padding-left: 3px; }
.tools > div { width: 28.200px; height: 28px; display: flex; align-items: center; justify-content: center; position: relative; }
.tools svg { width: 16px; height: 16px; margin-top: -1px; }
.tools small { position: absolute; left: 9px; top: 8px; font: 8px/10px "Open Sans", sans-serif; color: #888; }
.more::after { content: ""; position: absolute; right: 0; bottom: 1px; border: 2.500px solid #fff; border-left-color: transparent; border-top-color: transparent; }
.sep::before { content: ""; position: absolute; left: 0; top: 6px; width: 1px; height: 16px; background: #222; }
.tools .letter { font: bold 18px "Liberation Serif", serif; color: #777; }
.side { width: 25px; height: 730px; margin: -25px 3px 0 3px; background: #404040; position: relative; display: flex; justify-content: center; align-items: flex-start; }
.proptab { width: 20px; height: 62px; margin-top: 1px; background: #505050; border: 1px solid #222; border-radius: 4px; writing-mode: vertical-rl; text-align: center; line-height: 17px; color: #fff; letter-spacing: -.2px; }

.layers { height: 25px; flex: none; background: #353535; display: flex; padding-left: 6px; }
.ls { width: 46px; height: 14px; margin: 3px 4px 0 0; border: 1px solid #1e1e1e; display: flex; background: #505050; border-radius: 0 4px 4px 0; line-height: 11px; }
.ls b { width: 25px; background: #f00; } .ls span { padding-left: 4px; letter-spacing: -.3px; }
.layer { height: 19px; border: 1px solid #222; border-top: 0; border-left-color: #404040; border-radius: 0 0 4px 4px; display: flex; padding: 4px 0 0 5px; flex: none; }
.layer b { width: 10px; height: 10px; border: 1px solid #aaa; margin-right: 8px; flex: none; }
.layer span { line-height: 13px; margin-top: -1px; letter-spacing: -.36px; }
.active { background: #4f4f4f; color: #fff; }
.active span { font-weight: bold; letter-spacing: -.5px; }

.status { height: 24px; flex: none; background: #404040; display: flex; align-items: center; padding-left: 5px; }
.status > * { flex: none; }
.s1 { width: 81px; letter-spacing: -.85px; word-spacing: 1px; } .s2 { width: 93px; letter-spacing: -.6px; word-spacing: 1px; } .s3 { width: 226px; letter-spacing: -.18px; }
.s4 { width: 408px; height: 17px; border-left: 2px solid #353535; border-right: 2px solid #353535; }
.panels { margin-left: auto; margin-right: 4px; width: 45px; height: 18px; margin-top: 1px; border: 1px solid #222; border-radius: 4px; background: #505050; color: #fff; text-align: center; line-height: 16px; letter-spacing: -.3px; }

.taskbar { height: 40px; flex: none; display: flex; background: linear-gradient(90deg, #21363f, #22363f 45%, #20314a 75%, #202c45); color: #fff; }
.start { width: 48px; display: flex; align-items: center; justify-content: center; }
.find-box { width: 288px; background: #f2f2f2; border: 1px solid #b8bcbe; display: flex; align-items: center; padding-left: 11px; color: #222; font-size: 15px; position: relative; }
.find-box span { margin-left: 11px; letter-spacing: -.5px; }
.mag { margin-top: -2px; }
.panda { position: absolute; right: 0; top: 0; }
.slot { width: 48px; margin-right: 1px; display: flex; align-items: center; justify-content: center; position: relative; }
.slot:nth-child(n+5) { padding-right: 1px; }
.taskview { margin-left: 0; width: 50px; padding-right: 2px; }
.open::after { content: ""; position: absolute; left: 4px; right: 4px; bottom: 0; height: 2px; background: #76b9ed; }
.current { background: #52646c; } .current::after { left: 0; right: 0; }
.dev { font: bold 10px "Open Sans", sans-serif; fill: #fff; } .cpp { font: bold 10px "Open Sans", sans-serif; fill: #0c1840; }
.tray { margin-left: auto; width: 308px; display: flex; align-items: center; font-size: 14px; position: relative; }
.temp { margin-left: 8px; width: 39px; letter-spacing: -.4px; } .haze { width: 53px; letter-spacing: -.8px; }
.chev { margin-right: 12px; } .cam { margin-right: 9px; } .globe { margin-right: 8px; }
.clock { width: 53px; display: flex; flex-direction: column; align-items: center; font-size: 11.500px; line-height: 17px; margin-top: -2px; letter-spacing: -.15px; }
.notif { margin-left: 17px; width: 25px; height: 25px; position: relative; padding-top: 4px; }
.notif b { position: absolute; left: 8px; top: 10px; width: 16px; height: 16px; border: 1px solid #999; border-radius: 50%; background: #30353a; font-size: 11px; line-height: 14px; text-align: center; font-weight: 600; }
.tray > i { position: absolute; right: 4px; top: 0; width: 1px; height: 40px; background: #78828f; }
.mark { font: italic bold 22px "Open Sans", sans-serif; fill: #ddd; }
</style>
